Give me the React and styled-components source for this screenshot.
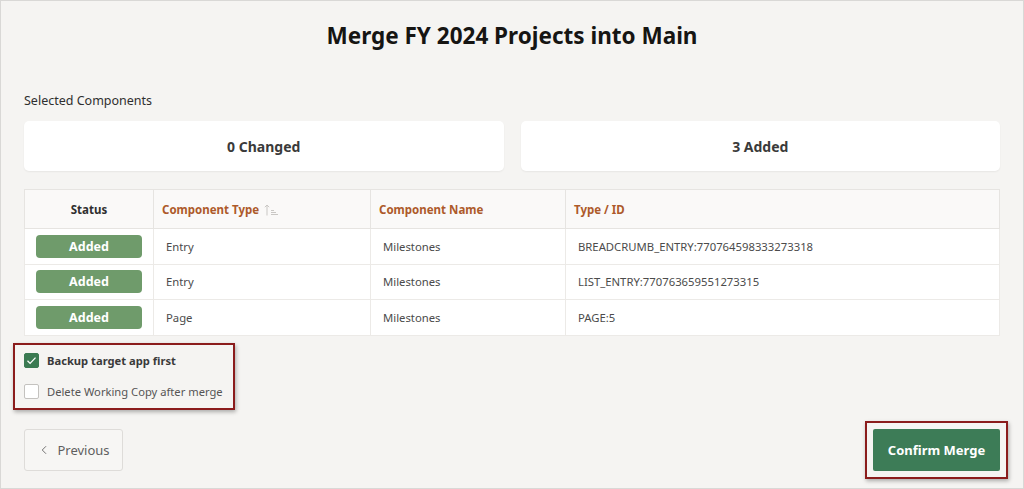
import styled, { createGlobalStyle } from "styled-components";
import { ChevronLeft } from "lucide-react";

const GlobalStyle = createGlobalStyle`
  html, body {
    margin: 0;
    padding: 0;
    background: #f5f4f2;
  }
  * {
    box-sizing: border-box;
  }
`;

const Page = styled.div`
  width: 1024px;
  height: 489px;
  border: 1px solid #d9d8d6;
  background: #f5f4f2;
  padding: 0 23px;
  display: flex;
  flex-direction: column;
  font-family: "Noto Sans", "Open Sans", sans-serif;
  color: #2f2f2f;
  overflow: hidden;
`;

const Title = styled.h1`
  margin: 17px 0 0;
  height: 36px;
  line-height: 36px;
  text-align: center;
  font-size: 22.5px;
  font-weight: 700;
  color: #161513;
`;

const SectionLabel = styled.div`
  margin-top: 38px;
  height: 18px;
  line-height: 18px;
  font-size: 12.5px;
  color: #2f2f2f;
`;

const Cards = styled.div`
  margin-top: 11px;
  display: grid;
  grid-template-columns: 1fr 1fr;
  gap: 17px;
`;

const Card = styled.div`
  height: 50px;
  background: #fff;
  border-radius: 5px;
  box-shadow: 0 1px 2px rgba(0, 0, 0, 0.06);
  display: flex;
  align-items: center;
  justify-content: center;
  font-size: 14px;
  font-weight: 700;
  color: #3a3a3a;
`;

const Table = styled.table`
  margin-top: 18px;
  width: 100%;
  border-collapse: collapse;
  background: #fff;
  border: 1px solid #e6e4e1;
  font-size: 11.3px;
  table-layout: fixed;
`;

const Th = styled.th`
  height: 39px;
  background: #faf9f8;
  border: 1px solid #e6e4e1;
  padding: 0 8px;
  text-align: ${(p) => (p.$center ? "center" : "left")};
  font-weight: 700;
  font-size: 11.5px;
  color: ${(p) => (p.$center ? "#2f2f2f" : "#ad5a2a")};
`;

const Td = styled.td`
  height: 35.5px;
  border: 1px solid #eceae7;
  padding: 0 ${(p) => (p.$center ? "0" : "12px")};
  text-align: ${(p) => (p.$center ? "center" : "left")};
  color: #4b4b4b;
`;

const Badge = styled.span`
  display: inline-block;
  width: 106px;
  height: 23px;
  line-height: 23px;
  border-radius: 4px;
  background: #6f9b6b;
  color: #fff;
  font-weight: 700;
  font-size: 12.5px;
  text-align: center;
`;

const SortIcon = styled.svg`
  margin-left: 5px;
  vertical-align: -2px;
`;

const Highlight = styled.div`
  border: 2px solid #8b1c1c;
  box-shadow: 1px 2px 4px rgba(0, 0, 0, 0.3);
`;

const OptionsBox = styled(Highlight)`
  align-self: flex-start;
  margin: 7px 0 0 -11px;
  padding: 7px 10px 7px 9px;
  display: flex;
  flex-direction: column;
  gap: 13px;
`;

const Option = styled.label`
  display: flex;
  align-items: center;
  gap: 8px;
  height: 18px;
  font-size: 11.2px;
  font-weight: ${(p) => (p.$bold ? 700 : 400)};
  color: ${(p) => (p.$bold ? "#3a3a3a" : "#555")};
`;

const Box = styled.span`
  width: 15px;
  height: 15px;
  border-radius: 2px;
  display: flex;
  align-items: center;
  justify-content: center;
  background: ${(p) => (p.$checked ? "#3b7a52" : "#fff")};
  border: 1px solid ${(p) => (p.$checked ? "#3b7a52" : "#c4c2bf")};
`;

const Footer = styled.div`
  margin-top: 11px;
  display: flex;
  justify-content: space-between;
  align-items: center;
`;

const PrevButton = styled.button`
  height: 42px;
  width: 99px;
  border: 1px solid #dedcd9;
  border-radius: 3px;
  background: #f7f6f4;
  color: #5f5f5f;
  font-family: inherit;
  font-size: 13px;
  display: flex;
  align-items: center;
  justify-content: center;
  gap: 6px;
  padding: 0;
`;

const ConfirmBox = styled(Highlight)`
  margin-right: -8px;
  padding: 6px;
`;

const ConfirmButton = styled.button`
  height: 42px;
  width: 127px;
  border: none;
  border-radius: 2px;
  background: #3d7c57;
  color: #fff;
  font-family: inherit;
  font-size: 13px;
  font-weight: 700;
`;

const rows = [
  { type: "Entry", name: "Milestones", id: "BREADCRUMB_ENTRY:770764598333273318" },
  { type: "Entry", name: "Milestones", id: "LIST_ENTRY:770763659551273315" },
  { type: "Page", name: "Milestones", id: "PAGE:5" },
];

export default function App() {
  return (
    <>
      <GlobalStyle />
      <Page>
        <Title>Merge FY 2024 Projects into Main</Title>
        <SectionLabel>Selected Components</SectionLabel>
        <Cards>
          <Card>0 Changed</Card>
          <Card>3 Added</Card>
        </Cards>
        <Table>
          <colgroup>
            <col style={{ width: 129 }} />
            <col style={{ width: 217 }} />
            <col style={{ width: 195 }} />
            <col />
          </colgroup>
          <thead>
            <tr>
              <Th $center>Status</Th>
              <Th>
                Component Type
                <SortIcon width="14" height="12" viewBox="0 0 14 12" fill="none" stroke="#c9c7c4" strokeWidth="1">
                  <path d="M3 11.5V1M0.8 3.2L3 1l2.2 2.2" />
                  <path d="M7 6.5h3M7 8.5h5M7 10.5h7" />
                </SortIcon>
              </Th>
              <Th>Component Name</Th>
              <Th>Type / ID</Th>
            </tr>
          </thead>
          <tbody>
            {rows.map((r) => (
              <tr key={r.id}>
                <Td $center>
                  <Badge>Added</Badge>
                </Td>
                <Td>{r.type}</Td>
                <Td>{r.name}</Td>
                <Td>{r.id}</Td>
              </tr>
            ))}
          </tbody>
        </Table>
        <OptionsBox>
          <Option $bold>
            <Box $checked>
              <svg width="11" height="11" viewBox="0 0 11 11" fill="none" stroke="#fff" strokeWidth="1.3">
                <path d="M1.5 5.8l2.6 2.6L9.5 2.6" />
              </svg>
            </Box>
            Backup target app first
          </Option>
          <Option>
            <Box />
            Delete Working Copy after merge
          </Option>
        </OptionsBox>
        <Footer>
          <PrevButton>
            <ChevronLeft size={14} strokeWidth={1.5} />
            Previous
          </PrevButton>
          <ConfirmBox>
            <ConfirmButton>Confirm Merge</ConfirmButton>
          </ConfirmBox>
        </Footer>
      </Page>
    </>
  );
}
